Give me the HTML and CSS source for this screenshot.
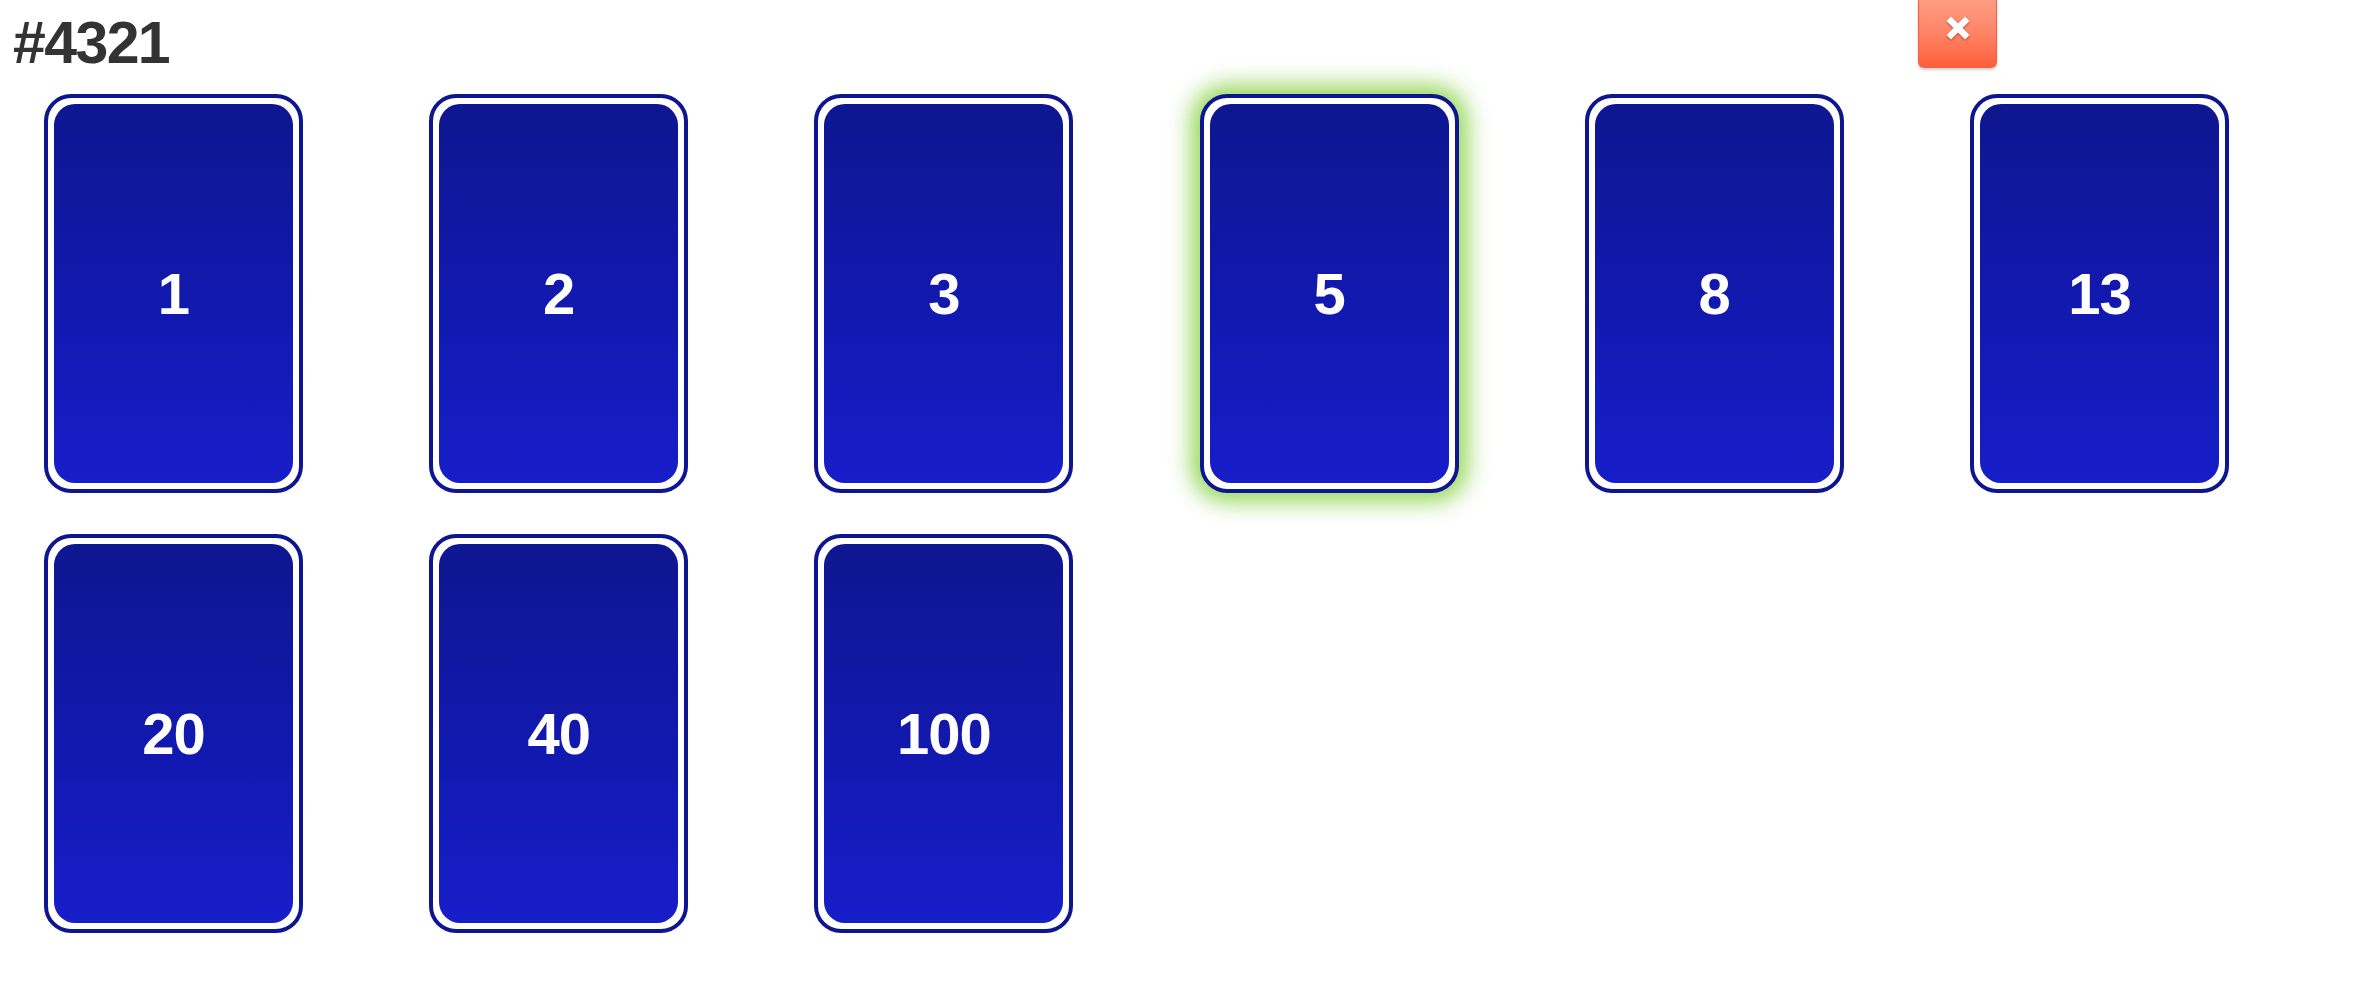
FILE: index.html
```html
<!DOCTYPE html>
<html>
<head>
<meta charset="utf-8">
<link rel="stylesheet" href="styles.css">
</head>
<body>
<header class="header">
  <h1 class="title">#4321</h1>
  <button class="close-btn" aria-label="close">
    <svg class="close-icon" viewBox="0 0 24 24" width="24" height="24">
      <path d="M5 5 L19 19 M19 5 L5 19" stroke="#fff" stroke-width="6.5" stroke-linecap="square" fill="none"/>
    </svg>
  </button>
</header>
<main class="deck">
  <div class="card"><div class="face">1</div></div>
  <div class="card"><div class="face">2</div></div>
  <div class="card"><div class="face">3</div></div>
  <div class="card selected"><div class="face">5</div></div>
  <div class="card"><div class="face">8</div></div>
  <div class="card"><div class="face">13</div></div>
  <div class="card"><div class="face">20</div></div>
  <div class="card"><div class="face">40</div></div>
  <div class="card"><div class="face">100</div></div>
</main>
</body>
</html>
```
FILE: styles.css
```css
html, body {
  margin: 0;
  padding: 0;
  background: #ffffff;
  font-family: "Liberation Sans", Arial, sans-serif;
}

.header {
  display: flex;
  align-items: flex-start;
  height: 94px;
}

.title {
  margin: 0;
  padding: 14px 0 0 13px;
  font-size: 59px;
  line-height: 59px;
  font-weight: bold;
  letter-spacing: -1.6px;
  color: #333333;
}

.close-btn {
  margin-left: auto;
  margin-right: 383px;
  width: 79px;
  height: 68px;
  padding: 0;
  border: 1px solid #f7603e;
  border-top: none;
  border-radius: 0 0 6px 6px;
  background: linear-gradient(to bottom, #fd9c83 0%, #ff8466 50%, #ff5e3b 100%);
  box-shadow: 0 2px 3px rgba(0, 0, 0, 0.18);
  display: flex;
  align-items: center;
  justify-content: center;
}

.close-icon {
  width: 24px;
  height: 24px;
  filter: drop-shadow(0 1px 1px rgba(120, 30, 10, 0.6));
  margin-top: -12px;
}

.deck {
  display: grid;
  grid-template-columns: repeat(6, 259px);
  column-gap: 126.2px;
  row-gap: 41px;
  padding-left: 44px;
}

.card {
  box-sizing: border-box;
  width: 259px;
  height: 399px;
  border: 4px solid #0e1591;
  border-radius: 27px;
  padding: 6px;
  background: #ffffff;
}

.card.selected {
  box-shadow: 0 0 22px 9px rgba(140, 212, 75, 0.9);
}

.face {
  height: 100%;
  border-radius: 21px;
  background: linear-gradient(to bottom, #0e1690 0%, #1219b0 55%, #171ec9 100%);
  display: flex;
  align-items: center;
  justify-content: center;
  color: #ffffff;
  font-size: 58px;
  font-weight: bold;
  letter-spacing: -1px;
}
```
